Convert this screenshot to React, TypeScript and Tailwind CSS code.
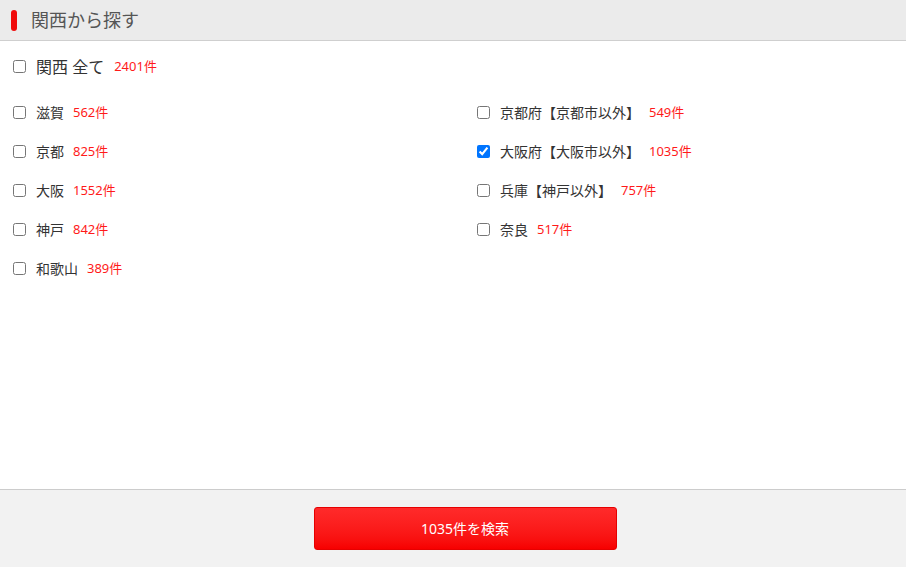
import React from "react";

const left = [
  { name: "滋賀", count: "562件" },
  { name: "京都", count: "825件" },
  { name: "大阪", count: "1552件" },
  { name: "神戸", count: "842件" },
  { name: "和歌山", count: "389件" },
];
const right = [
  { name: "京都府【京都市以外】", count: "549件" },
  { name: "大阪府【大阪市以外】", count: "1035件", checked: true },
  { name: "兵庫【神戸以外】", count: "757件" },
  { name: "奈良", count: "517件" },
];

function Row({ name, count, checked }: { name: string; count: string; checked?: boolean }) {
  return (
    <label className="flex items-center h-[39px]">
      <input type="checkbox" defaultChecked={checked} className="m-0 w-[13px] h-[13px]" />
      <span className="ml-[10px] text-[14px] text-[#333]">{name}</span>
      <span className="ml-[9px] text-[13px] text-[#ff1a1a]">{count}</span>
    </label>
  );
}

export default function App() {
  return (
    <div
      className="w-[906px] h-[567px] flex flex-col bg-white"
      style={{ fontFamily: '"Noto Sans", "Noto Sans CJK JP", sans-serif' }}
    >
      <div className="h-[41px] bg-[#ebebeb] border-b border-[#cfcfcf] flex items-center pl-[11px] shrink-0">
        <div className="w-[6px] h-[21px] rounded-[3px] bg-[#f00a0a]" />
        <span className="ml-[14px] text-[18px] text-[#555] leading-none">関西から探す</span>
      </div>
      <div className="flex-1 pl-[13px] pt-[13px]">
        <label className="flex items-center h-[25px]">
          <input type="checkbox" className="m-0 w-[13px] h-[13px]" />
          <span className="ml-[10px] text-[16px] text-[#333]">関西 全て</span>
          <span className="ml-[10px] text-[13px] text-[#ff1a1a]">2401件</span>
        </label>
        <div className="grid grid-cols-[464px_1fr] mt-[14px]">
          <div className="flex flex-col">
            {left.map((r) => (
              <Row key={r.name} {...r} />
            ))}
          </div>
          <div className="flex flex-col">
            {right.map((r) => (
              <Row key={r.name} {...r} />
            ))}
          </div>
        </div>
      </div>
      <div className="h-[78px] shrink-0 bg-[#f2f2f2] border-t border-[#cccccc] flex justify-center pl-[24px] pt-[17px]">
        <button className="w-[303px] h-[43px] rounded-[3px] border border-[#e60000] bg-gradient-to-b from-[#ff2a2a] to-[#f70000] text-white text-[14px]">
          1035件を検索
        </button>
      </div>
    </div>
  );
}
